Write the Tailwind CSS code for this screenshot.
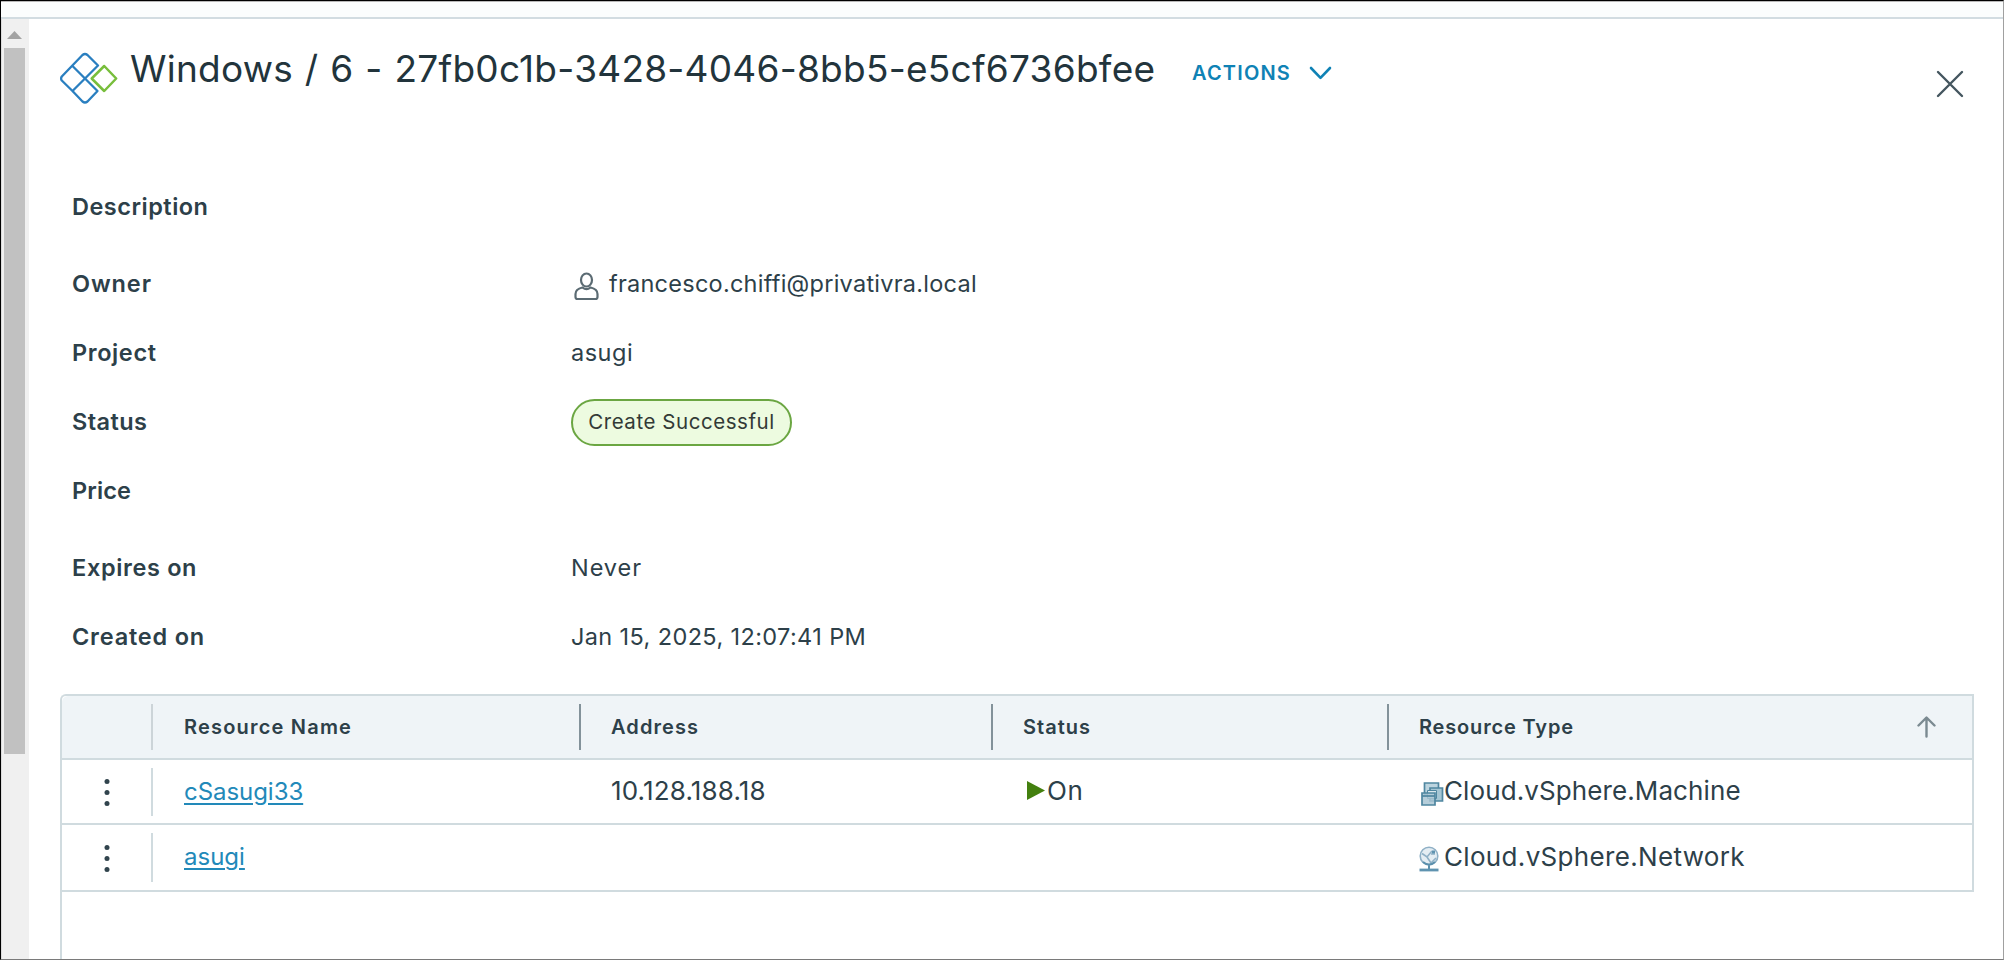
<!DOCTYPE html>
<html lang="en">
<head>
<meta charset="utf-8">
<title>Deployment</title>
<script src="https://cdn.jsdelivr.net/npm/@tailwindcss/browser@4"></script>
</head>
<body class="w-[2004px] h-[960px] overflow-hidden bg-white font-['Inter',sans-serif] text-[#2d4049] border border-t-black border-l-black border-r-[#a0a0a0] border-b-[#7a7a7a] flex flex-col">
<div class="h-[18px] shrink-0 bg-[#fbfdfd] border-t border-t-[#b8b8b8] border-b-2 border-b-[#d2dce1]"></div>
<div class="flex flex-1 min-h-0">
  <!-- scrollbar -->
  <div class="w-7 shrink-0 bg-[#f0f0f0] border-l border-[#dcdcdc] pl-[2px]">
    <svg class="block mt-3 ml-[3px]" width="15" height="8" viewBox="0 0 15 8"><path d="M0 8 7.500 0 15 8z" fill="#a3a3a3"/></svg>
    <div class="mt-[9px] w-[21px] h-[706px] bg-[#c1c1c1]"></div>
  </div>
  <main class="flex-1 min-w-0 flex flex-col pl-[31px] pr-7">
    <header class="h-[149px] shrink-0 flex items-start">
      <svg class="mt-[33px] shrink-0" width="58" height="53" viewBox="0 0 58 53" fill="none" stroke-width="2.300" stroke-linejoin="round">
        <g stroke="#2a7fc0"><path d="M22.500 3Q25 1 27.500 3L38 13.500 12.500 39 1.800 28.500Q.4 26.500 1.800 24.500z"/><path d="M12.500 14 37.500 39 27.500 49.500Q25 51.500 22.500 49.500L12.500 39"/></g>
        <path d="M44.200 14 56.200 26.500 44.200 39 31.700 26.500z" stroke="#78be3c" stroke-width="2.500"/>
      </svg>
      <h1 class="ml-[12px] mt-[26px] h-12 leading-[48px] text-[37px] text-[#22343c] whitespace-nowrap w-[1062px] tracking-[0.25px] [word-spacing:1.2px]">Windows / 6 - 27fb0c1b-3428-4046-8bb5-e5cf6736bfee</h1>
      <div class="mt-10 h-7 flex items-center text-[20px] font-semibold text-[#0f82b5]"><span class="tracking-[1.16px]">ACTIONS</span>
        <svg class="ml-[18px]" width="23" height="14" viewBox="0 0 23 14" fill="none" stroke="#0f82b5" stroke-width="2.600" stroke-linecap="round" stroke-linejoin="round"><path d="M2 2 11.500 11.800 21 2"/></svg>
      </div>
      <svg class="ml-auto mr-[11px] mt-[51px]" width="28" height="28" viewBox="0 0 28 28" stroke="#44565f" stroke-width="2.400" stroke-linecap="round"><path d="M2 2 26 26M26 2 2 26"/></svg>
    </header>

    <dl class="shrink-0 h-[525px] grid grid-cols-[499px_1fr] grid-rows-[77px_69px_69px_69px_77px_69px_69px] text-[23.500px] pl-3 [&>dt]:font-semibold [&>dt]:h-[77px] [&>dd]:h-[77px] [&>dt]:flex [&>dd]:flex [&>dt]:items-center [&>dd]:items-center">
      <dt class="tracking-[0.5px]">Description</dt><dd></dd>
      <dt class="tracking-[0.9px]">Owner</dt>
      <dd>
        <svg class="ml-[3px] mr-[10px] mt-[5px]" width="25" height="29" viewBox="0 0 25 29" fill="none" stroke="#5b6b73" stroke-width="2.200"><ellipse cx="12.500" cy="8" rx="5.500" ry="6.500"/><path d="M8.500 15.500C4 16.500 1.500 19 1.500 22v3q0 2 2 2h18q2 0 2-2v-3c0-3-2.500-5.500-7-6.500-2.500 2-5.500 2-8 0z"/></svg>
        <span class="tracking-[0.25px]">francesco.chiffi@privativra.local</span></dd>
      <dt class="tracking-[0.61px]">Project</dt><dd class="tracking-[0.5px]">asugi</dd>
      <dt class="tracking-[0.44px]">Status</dt>
      <dd><span class="mt-px w-[221px] h-[47px] rounded-full border-2 border-[#6ba642] bg-[#edfbe0] flex items-center justify-center text-[20.500px] text-[#323a36] tracking-[0.55px] pt-px">Create Successful</span></dd>
      <dt class="tracking-[0.14px]">Price</dt><dd></dd>
      <dt class="tracking-[0.65px]">Expires on</dt><dd class="tracking-[0.94px]">Never</dd>
      <dt class="tracking-[0.8px]">Created on</dt><dd class="tracking-[0.38px]">Jan 15, 2025, 12:07:41 PM</dd>
    </dl>

    <section class="flex-1 w-[1914px] border-l-2 border-t-2 border-[#d0dbdf] rounded-tl-md mt-px">
      <div class="border-r-2 border-[#d0dbdf]">
        <div class="h-[64px] bg-[#eff4f7] border-b-2 border-[#d0dbdf] grid grid-cols-[91px_428px_412px_396px_1fr] items-center text-[20px] font-semibold rounded-tl-md">
          <div class="h-[46px] border-r-2 border-[#ccd4d8]"></div>
          <div class="h-[46px] border-r-2 border-[#83929a] pl-[31px] flex items-center tracking-[1.2px]">Resource Name</div>
          <div class="h-[46px] border-r-2 border-[#83929a] pl-[30px] flex items-center tracking-[1.08px]">Address</div>
          <div class="h-[46px] border-r-2 border-[#83929a] pl-[30px] flex items-center tracking-[1px]">Status</div>
          <div class="pl-[30px] pr-[36px] flex items-center justify-between"><span class="tracking-[0.83px]">Resource Type</span>
            <svg width="19" height="22" viewBox="0 0 19 22" fill="none" stroke="#7b8a91" stroke-width="2.400" stroke-linecap="round" stroke-linejoin="round"><path d="M9.500 20.500V2M1.500 9.500 9.500 1.500 17.500 9.500"/></svg></div>
        </div>
        <div class="h-[65px] border-b-2 border-[#d0dbdf] grid grid-cols-[91px_428px_412px_396px_1fr] items-center text-[26px]">
          <div class="h-[48px] border-r-2 border-[#d0dbdf] pl-[42px] pt-px flex items-center"><svg width="6" height="29" viewBox="0 0 6 29" fill="#31444d"><circle cx="3" cy="3.500" r="2.500"/><circle cx="3" cy="14.500" r="2.500"/><circle cx="3" cy="25.500" r="2.500"/></svg></div>
          <div class="pl-[31px]"><a class="block text-[24px] text-[#2289b9] underline underline-offset-[3px] decoration-2 tracking-[-0.05px]">cSasugi33</a></div>
          <div class="pl-[30px] pb-[2px] tracking-[0.15px]">10.128.188.18</div>
          <div class="pl-[34px] pb-[2px] flex items-center tracking-[0.5px]"><svg class="mr-[2px]" width="18" height="19" viewBox="0 0 18 19"><path d="M0 0 18 9.500 0 19z" fill="#43800f"/></svg>On</div>
          <div class="pl-[31px] pb-[2px] flex items-center">
            <svg class="mt-[6px]" width="24" height="26" viewBox="0 0 24 26" stroke="#4f86a0" stroke-width="1.700"><path d="M4.500 2h14v11h-14z" fill="#bcd4df"/><path d="M10 7h12.500v13H10z" fill="#a5c6d4"/><path d="M7.500 9.500h9v8h-9z" fill="#dbe8ee" stroke-width="1"/><path d="M2 12h13v12H2z" fill="#a9c6d3" fill-opacity=".85"/><path d="M2 15h13" /></svg>
            <span class="tracking-[0.1px]">Cloud.vSphere.Machine</span></div>
        </div>
        <div class="h-[67px] border-b-2 border-[#d0dbdf] grid grid-cols-[91px_428px_412px_396px_1fr] items-center text-[26px]">
          <div class="h-[49px] border-r-2 border-[#d0dbdf] pl-[42px] pt-px flex items-center"><svg width="6" height="29" viewBox="0 0 6 29" fill="#31444d"><circle cx="3" cy="3.500" r="2.500"/><circle cx="3" cy="14.500" r="2.500"/><circle cx="3" cy="25.500" r="2.500"/></svg></div>
          <div class="pl-[31px] pb-px"><a class="block text-[24px] text-[#2289b9] underline underline-offset-[3px] decoration-2">asugi</a></div>
          <div></div><div></div>
          <div class="pl-[30px] pb-[3px] flex items-center">
            <svg class="mr-[5px] mt-[5px]" width="20" height="26" viewBox="0 0 20 26" fill="none"><circle cx="10" cy="10" r="8.800" fill="#e4edf3" stroke="#8fb0c6" stroke-width="1.600"/><path d="M3 7.500 8 11l5-6M8 11l4 6 5-5M12 8h4" stroke="#8fb0c6" stroke-width="1.600"/><path d="M13 4.500h3v3h-3z" fill="#5f93b0"/><path d="M4 16q6 5 12 0M10 19v4" stroke="#5b90ad" stroke-width="2"/><path d="M.5 24h19" stroke="#5f93b0" stroke-width="2.800"/></svg>
            <span class="tracking-[0.33px]">Cloud.vSphere.Network</span></div>
        </div>
      </div>
    </section>
  </main>
</div>
</body>
</html>
